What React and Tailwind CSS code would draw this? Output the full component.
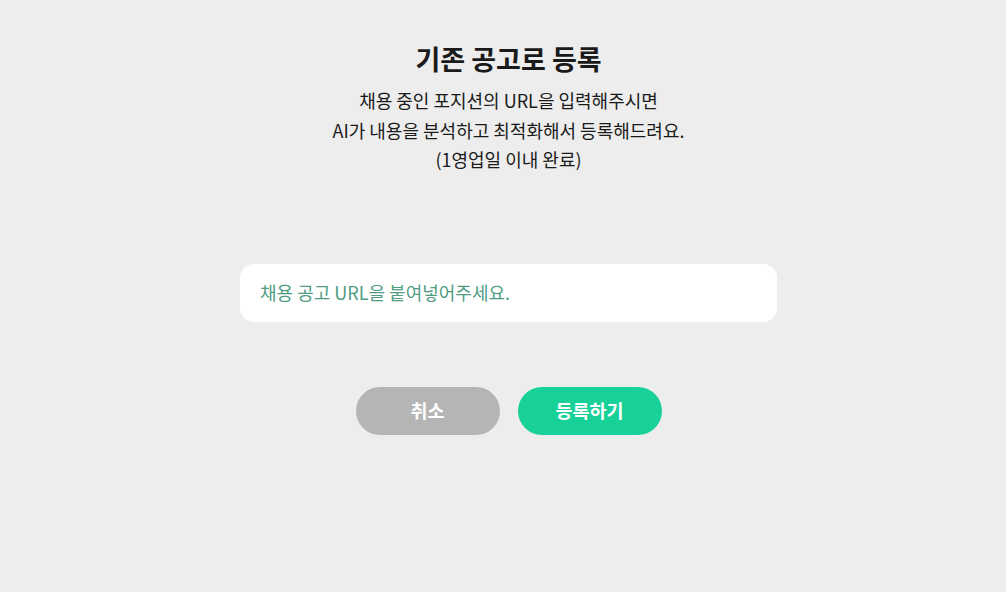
export default function App() {
  return (
    <div
      className="flex h-[592px] w-full flex-col items-center bg-[#ededed] pl-[11px] pt-[36px]"
      style={{ fontFamily: '"Noto Sans CJK KR", "Noto Sans", sans-serif' }}
    >
      <h1 className="text-[27px] font-bold leading-[46px] text-[#1a1a1a]">기존 공고로 등록</h1>
      <p className="mt-[4px] text-center text-[18px] leading-[29.5px] text-[#1a1a1a]">
        채용 중인 포지션의 URL을 입력해주시면
        <br />
        AI가 내용을 분석하고 최적화해서 등록해드려요.
        <br />
        (1영업일 이내 완료)
      </p>

      <div className="mt-[89px] flex h-[58px] w-[537px] items-center rounded-[14px] bg-white px-5">
        <input
          type="text"
          placeholder="채용 공고 URL을 붙여넣어주세요."
          className="w-full bg-transparent text-[18px] text-[#1a1a1a] outline-none placeholder:text-[#4f9c83]"
        />
      </div>

      <div className="mt-[65px] flex gap-[18px]">
        <button className="h-[48px] w-[144px] rounded-full bg-[#b5b5b5] text-[18.5px] font-bold text-white">취소</button>
        <button className="h-[48px] w-[144px] rounded-full bg-[#17d199] text-[18.5px] font-bold text-white">등록하기</button>
      </div>
    </div>
  );
}
